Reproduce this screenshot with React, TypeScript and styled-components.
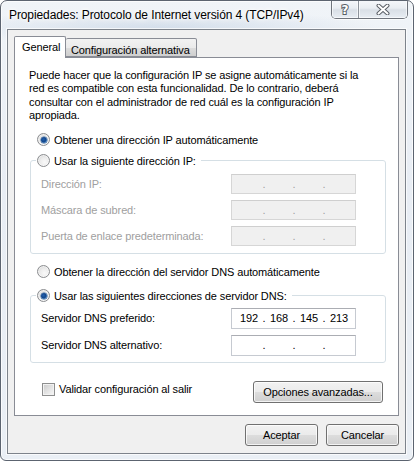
import React from 'react';
import styled, { createGlobalStyle } from 'styled-components';

const GlobalStyle = createGlobalStyle`
  html, body { margin: 0; padding: 0; width: 414px; height: 461px; overflow: hidden; background: #ffffff; }
  body { font-family: "Liberation Sans", Arial, sans-serif; font-size: 11px; letter-spacing: -0.12px; color: #000; }
  * { box-sizing: border-box; }
`;

const Window = styled.div`
  width: 414px;
  height: 461px;
  border: 1px solid #5c6470;
  border-radius: 7px 7px 6px 6px;
  background:
    radial-gradient(ellipse 220px 18px at 160px 27px, rgba(150, 175, 205, 0.3), rgba(150, 175, 205, 0) 100%),
    linear-gradient(180deg, #f0f4f8 0%, #e8edf4 40%, #eaeff5 100%);
  box-shadow: inset 0 0 0 1px rgba(255, 255, 255, 0.75);
  display: flex;
  flex-direction: column;
  overflow: hidden;
`;

const TitleBar = styled.div`
  height: 28px;
  flex: none;
  display: flex;
  align-items: flex-start;
  padding: 0 5px 0 8px;
`;

const Title = styled.div`
  flex: 1;
  height: 28px;
  line-height: 28px;
  font-size: 12px;
  letter-spacing: -0.1px;
  white-space: nowrap;
  color: #000;
  text-shadow: 0 0 6px #fff, 0 0 10px #fff, 0 0 3px #fff;
`;

const CaptionGroup = styled.div`
  margin-top: -1px;
  height: 19px;
  display: flex;
  border: 1px solid #6f747c;
  border-top: none;
  border-radius: 0 0 5px 5px;
  overflow: hidden;
  box-shadow: 0 1px 0 rgba(255, 255, 255, 0.7);
`;

const CaptionButton = styled.div<{ $w: number; $last?: boolean }>`
  width: ${(p) => p.$w}px;
  height: 100%;
  display: flex;
  align-items: center;
  justify-content: center;
  background: linear-gradient(180deg, #f6f8fb 0%, #e9edf2 45%, #d9dfe6 55%, #e8edf3 100%);
  box-shadow: inset 0 0 0 1px rgba(255, 255, 255, 0.6);
  border-right: ${(p) => (p.$last ? 'none' : '1px solid #8d939b')};
`;

const HelpGlyph = styled.span`
  font-family: "DejaVu Sans", sans-serif;
  font-weight: bold;
  font-size: 12px;
  line-height: 12px;
  letter-spacing: 0;
  color: #ffffff;
  -webkit-text-stroke: 2px #5a5f66;
  paint-order: stroke fill;
  margin-top: 1px;
`;

const Client = styled.div`
  width: 399px;
  height: 425px;
  margin-left: 6px;
  border: 1px solid #7d838b;
  background: #f0f0f0;
  box-shadow: 0 0 0 1px rgba(255, 255, 255, 0.7);
  padding: 0 6px;
  display: flex;
  flex-direction: column;
`;

const TabStrip = styled.div`
  height: 27px;
  flex: none;
  display: flex;
  align-items: flex-end;
`;

const Tab = styled.div<{ $active?: boolean; $w: number }>`
  position: relative;
  width: ${(p) => p.$w}px;
  height: ${(p) => (p.$active ? 22 : 19)}px;
  margin-bottom: ${(p) => (p.$active ? -1 : 0)}px;
  z-index: ${(p) => (p.$active ? 1 : 0)};
  border: 1px solid #898c95;
  border-bottom: ${(p) => (p.$active ? 'none' : '1px solid #898c95')};
  border-left: ${(p) => (p.$active ? '1px solid #898c95' : 'none')};
  border-radius: 2px 2px 0 0;
  background: ${(p) => (p.$active ? '#ffffff' : 'linear-gradient(180deg, #f2f2f2 0%, #ebebeb 50%, #dddddd 51%, #cfcfcf 100%)')};
  padding: ${(p) => (p.$active ? '3px 0 0 7px' : '4px 0 0 5px')};
  line-height: 14px;
  white-space: nowrap;
`;

const Panel = styled.div`
  height: 359px;
  flex: none;
  border: 1px solid #898c95;
  background: #ffffff;
  padding-top: 11px;
  display: flex;
  flex-direction: column;
`;

const Intro = styled.p`
  margin: 0 0 0 14px;
  line-height: 13.4px;
  white-space: nowrap;
`;

const RadioRow = styled.label<{ $mt: number }>`
  margin: ${(p) => p.$mt}px 0 0 22px;
  height: 16px;
  display: flex;
  align-items: center;
  gap: 4px;
  white-space: nowrap;
`;

const Radio = styled.span<{ $checked?: boolean }>`
  position: relative;
  flex: none;
  width: 13px;
  height: 13px;
  border-radius: 50%;
  border: 1px solid #8b8d90;
  background: radial-gradient(circle at 60% 65%, #f9f9f9 0%, #ececec 45%, #cdcdcd 100%);
  box-shadow: inset 0 0 0 1px rgba(255, 255, 255, 0.55);

  &::after {
    content: '';
    display: ${(p) => (p.$checked ? 'block' : 'none')};
    position: absolute;
    left: 2.5px;
    top: 2.5px;
    width: 6px;
    height: 6px;
    border-radius: 50%;
    background: radial-gradient(circle at 40% 40%, #1f5fae 0%, #14478c 45%, #5fa5e3 100%);
    box-shadow: 0 0 0 0.5px #2b5c93;
  }
`;

const Group = styled.fieldset<{ $mt: number }>`
  margin: ${(p) => p.$mt}px 0 0 15px;
  width: 356px;
  min-width: 0;
  border: 1px solid #d5dfe5;
  border-radius: 3px;
  box-shadow: inset 0 0 0 1px rgba(255, 255, 255, 0.9);
  padding: 0;
`;

const Legend = styled.legend`
  margin-left: 5px;
  padding: 0 5px 0 1px;
  height: 16px;
  display: flex;
  align-items: center;
  gap: 4px;
  white-space: nowrap;
`;

const GroupBody = styled.div<{ $pt: number; $pb: number }>`
  display: flex;
  flex-direction: column;
  gap: 6px;
  padding: ${(p) => p.$pt}px 29px ${(p) => p.$pb}px 10px;
`;

const FieldRow = styled.div`
  display: flex;
  align-items: center;
  justify-content: space-between;
`;

const FieldLabel = styled.span<{ $disabled?: boolean }>`
  color: ${(p) => (p.$disabled ? '#a0a0a0' : '#000')};
  white-space: nowrap;
`;

const IpBox = styled.div<{ $disabled?: boolean; $h: number }>`
  width: 125px;
  height: ${(p) => p.$h}px;
  display: flex;
  align-items: center;
  padding-left: 5px;
  border: 1px solid ${(p) => (p.$disabled ? '#d6d6d6' : '#c6cad1')};
  border-top-color: ${(p) => (p.$disabled ? '#cfcfcf' : '#abadb3')};
  background: ${(p) => (p.$disabled ? '#f0f0f0' : '#ffffff')};
  color: ${(p) => (p.$disabled ? '#a0a0a0' : '#000')};
`;

const IpPart = styled.span`
  width: 24px;
  text-align: center;
`;

const IpDot = styled.span`
  width: 6px;
  text-align: center;
`;

const BottomRow = styled.div`
  margin: 18px 15px 0 27px;
  display: flex;
  align-items: flex-start;
  justify-content: space-between;
`;

const CheckLabel = styled.label`
  margin-top: 2px;
  height: 13px;
  display: flex;
  align-items: center;
  gap: 4px;
  white-space: nowrap;
`;

const CheckBox = styled.span`
  flex: none;
  width: 13px;
  height: 13px;
  border: 1px solid #8e8f8f;
  background: linear-gradient(135deg, #c9c9c9 0%, #e2e2e2 50%, #f8f8f8 100%);
  box-shadow: inset 0 0 0 1px #f2f2f2;
`;

const Button = styled.button<{ $w: number }>`
  width: ${(p) => p.$w}px;
  height: 22px;
  padding: 0;
  border: 1px solid #707070;
  border-radius: 3px;
  background: linear-gradient(180deg, #f2f2f2 0%, #ebebeb 49%, #dddddd 50%, #cfcfcf 100%);
  box-shadow: inset 0 0 0 1px rgba(255, 255, 255, 0.75);
  font-family: "Liberation Sans", Arial, sans-serif;
  font-size: 11px;
  letter-spacing: -0.12px;
  color: #000;
`;

const Footer = styled.div`
  margin-top: 8px;
  display: flex;
  justify-content: flex-end;
  gap: 8px;
`;

const IpField = ({ parts, disabled, h }: { parts: string[]; disabled?: boolean; h: number }) => (
  <IpBox $disabled={disabled} $h={h}>
    {parts.map((p, i) => (
      <React.Fragment key={i}>
        {i > 0 && <IpDot>.</IpDot>}
        <IpPart>{p}</IpPart>
      </React.Fragment>
    ))}
  </IpBox>
);

const CloseIcon = () => (
  <svg width="14" height="11" viewBox="0 0 14 11">
    <path d="M2.5 1.5 L11.5 9.5 M11.5 1.5 L2.5 9.5" stroke="#5a5f66" strokeWidth="4" strokeLinecap="round" fill="none" />
    <path d="M2.5 1.5 L11.5 9.5 M11.5 1.5 L2.5 9.5" stroke="#ffffff" strokeWidth="2" strokeLinecap="round" fill="none" />
  </svg>
);

const empty = ['', '', '', ''];

export default function App() {
  return (
    <>
      <GlobalStyle />
      <Window>
        <TitleBar>
          <Title>Propiedades: Protocolo de Internet versión 4 (TCP/IPv4)</Title>
          <CaptionGroup>
            <CaptionButton $w={27}>
              <HelpGlyph>?</HelpGlyph>
            </CaptionButton>
            <CaptionButton $w={48} $last>
              <CloseIcon />
            </CaptionButton>
          </CaptionGroup>
        </TitleBar>
        <Client>
          <TabStrip>
            <Tab $active $w={52}>General</Tab>
            <Tab $w={131}>Configuración alternativa</Tab>
          </TabStrip>
          <Panel>
            <Intro>
              Puede hacer que la configuración IP se asigne automáticamente si la
              <br />
              red es compatible con esta funcionalidad. De lo contrario, deberá
              <br />
              consultar con el administrador de red cuál es la configuración IP
              <br />
              apropiada.
            </Intro>
            <RadioRow $mt={9}>
              <Radio $checked />
              Obtener una dirección IP automáticamente
            </RadioRow>
            <Group $mt={5}>
              <Legend>
                <Radio />
                Usar la siguiente dirección IP:
              </Legend>
              <GroupBody $pt={5} $pb={7}>
                <FieldRow>
                  <FieldLabel $disabled>Dirección IP:</FieldLabel>
                  <IpField parts={empty} disabled h={20} />
                </FieldRow>
                <FieldRow>
                  <FieldLabel $disabled>Máscara de subred:</FieldLabel>
                  <IpField parts={empty} disabled h={20} />
                </FieldRow>
                <FieldRow>
                  <FieldLabel $disabled>Puerta de enlace predeterminada:</FieldLabel>
                  <IpField parts={empty} disabled h={20} />
                </FieldRow>
              </GroupBody>
            </Group>
            <RadioRow $mt={10}>
              <Radio />
              Obtener la dirección del servidor DNS automáticamente
            </RadioRow>
            <Group $mt={8}>
              <Legend>
                <Radio $checked />
                Usar las siguientes direcciones de servidor DNS:
              </Legend>
              <GroupBody $pt={4} $pb={6}>
                <FieldRow>
                  <FieldLabel>Servidor DNS preferido:</FieldLabel>
                  <IpField parts={['192', '168', '145', '213']} h={21} />
                </FieldRow>
                <FieldRow>
                  <FieldLabel>Servidor DNS alternativo:</FieldLabel>
                  <IpField parts={empty} h={21} />
                </FieldRow>
              </GroupBody>
            </Group>
            <BottomRow>
              <CheckLabel>
                <CheckBox />
                Validar configuración al salir
              </CheckLabel>
              <Button $w={130}>Opciones avanzadas...</Button>
            </BottomRow>
          </Panel>
          <Footer>
            <Button $w={73}>Aceptar</Button>
            <Button $w={73}>Cancelar</Button>
          </Footer>
        </Client>
      </Window>
    </>
  );
}
